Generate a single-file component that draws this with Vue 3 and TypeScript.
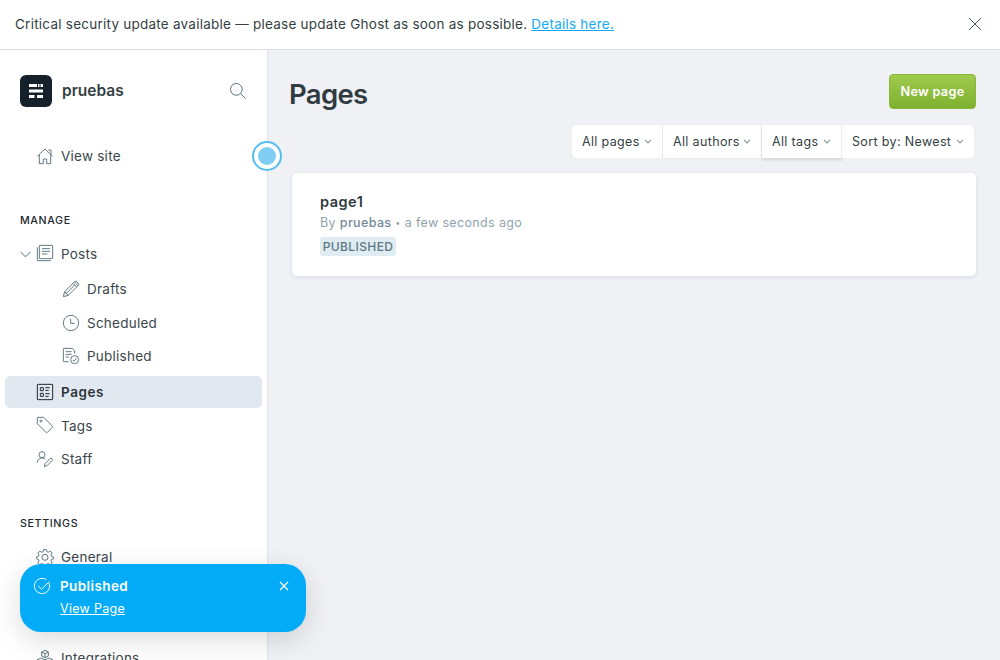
<script setup lang="ts">
interface NavItem {
  label: string
  icon: string
  gap: string
  child?: boolean
  active?: boolean
  expandable?: boolean
  raised?: boolean
}

// Outline icons drawn on a 24-unit grid.
const icons: Record<string, string> = {
  posts:
    'M4.5.5h18a1 1 0 0 1 1 1v18a1 1 0 0 1-1 1h-18a1 1 0 0 1-1-1v-18a1 1 0 0 1 1-1zM.5 3.5v19a1 1 0 0 0 1 1h19M7.5 5.5h12M7.5 9.5h12M7.5 13.5h8',
  drafts:
    'M.5 23.5l2-7.5L17 1.5a2.8 2.8 0 0 1 4 0l1.500 1.500a2.800 2.800 0 0 1 0 4L8 21.500zM2.500 16L8 21.500M15 3.500L20.500 9M17.200 1.500l5.300 5.300M5 18.500L17.500 6',
  scheduled: 'M12 .5a11.500 11.500 0 1 0 0 23a11.500 11.500 0 1 0 0-23zM11.500 5.500v7h6',
  published:
    'M8.500 20.500h-7a1 1 0 0 1-1-1v-18a1 1 0 0 1 1-1h12.500l3.500 3.500v4.500M4 5.500h9M4 9.500h9M4 13.500h5M17.500 11.500a6 6 0 1 0 0 12a6 6 0 1 0 0-12zM14.800 18l1.700 1.800l3.700-4.300',
  pages:
    'M1.500.5h21a1 1 0 0 1 1 1v21a1 1 0 0 1-1 1h-21a1 1 0 0 1-1-1v-21a1 1 0 0 1 1-1zM5 5.500h4.500v4.500h-4.500zM5 14h4.500v4.500h-4.500zM12.500 5.500h6.500M12.500 9.500h5M12.500 14.500h6.500M12.500 18.500h5',
  tags: 'M1.500.5h8.500l13 13a1.400 1.400 0 0 1 0 2l-7.500 7.500a1.400 1.400 0 0 1-2 0L.5 10v-8.500a1 1 0 0 1 1-1zM6 4.500a1.500 1.500 0 1 0 0 3a1.500 1.500 0 1 0 0-3z',
  staff:
    'M7.500 1a4.500 4.500 0 1 0 0 9a4.500 4.500 0 1 0 0-9zM.5 17.500c0-4.500 3-7 7-7c2 0 3.700.6 5 1.800M11 23.500l1-4.500l7.500-7.500a2.100 2.100 0 0 1 3 0a2.100 2.100 0 0 1 0 3L15 22z',
  home: 'M.5 12.500L12 1.500l11.500 11M3.500 10v13.500h6v-7h5v7h6V10M17 3h4v7',
  gear:
    'M10 .8h4l.8 3.200l2.200.9l2.900-1.700l2.800 2.800l-1.700 2.900l.9 2.200l2.600.7v3l-2.600.8l-.9 2.200l1.700 2.900l-2.800 2.800l-2.900-1.700l-2.200.9l-.8 2h-4l-.8-2l-2.200-.9l-2.900 1.700l-2.800-2.800l1.700-2.900l-.9-2.200l-2.600-.8v-3l2.600-.7l.9-2.200l-1.700-2.900l2.800-2.800l2.900 1.700l2.200-.9zM12 8a4.500 4.500 0 1 0 0 9a4.500 4.500 0 1 0 0-9z',
  cubes:
    'M12 .5l5 2.500v6l-5 2.500l-5-2.500V3zM7 3l5 2.500l5-2.500M12 5.500v6M6 12l5.500 2.500v6L6 23.500l-5.500-3v-6zM.5 14.500l5.500 2.700l5.500-2.700M6 17.200v6M18 12l5.500 2.500v6l-5.500 3l-5.500-3v-6zM12.500 14.500l5.500 2.700l5.500-2.700M18 17.200v6',
}

const manage: NavItem[] = [
  { label: 'Posts', icon: 'posts', gap: 'g0', expandable: true, raised: true },
  { label: 'Drafts', icon: 'drafts', gap: 'g3', child: true },
  { label: 'Scheduled', icon: 'scheduled', gap: 'g2', child: true },
  { label: 'Published', icon: 'published', gap: 'g1', child: true },
  { label: 'Pages', icon: 'pages', gap: 'g4', active: true },
  { label: 'Tags', icon: 'tags', gap: 'g2', raised: true },
  { label: 'Staff', icon: 'staff', gap: 'g1' },
]
const settings: NavItem[] = [
  { label: 'General', icon: 'gear', gap: 'g0' },
  { label: 'Integrations', icon: 'cubes', gap: 'far' },
]
const groups = [
  { title: 'Manage', items: manage },
  { title: 'Settings', items: settings },
]
const filters = [
  { label: 'All pages', cls: 'f1' },
  { label: 'All authors', cls: 'f2' },
  { label: 'All tags', cls: 'f3' },
  { label: 'Sort by: Newest', cls: 'f4' },
]
</script>

<template>
  <div class="app">
    <header class="banner">
      <p>Critical security update available — please update Ghost as soon as possible. <a>Details here.</a></p>
      <svg class="banner-close" viewBox="0 0 14 14"><path d="M1 1l12 12M13 1L1 13" /></svg>
    </header>
    <div class="body">
      <nav class="sidebar">
        <div class="brand">
          <svg class="logo" viewBox="0 0 32 32">
            <rect width="32" height="32" rx="6" fill="#15212a" />
            <path d="M9 9h8v3H9zM18 9h1.500v3H18zM20.500 9h2.500v3h-2.500zM9 14.500h14v3H9zM9 20h5.500v3H9zM17 20h6v3h-6z" fill="#fff" />
          </svg>
          <span class="brand-name">pruebas</span>
          <svg class="search" viewBox="0 0 24 24"><circle cx="9.500" cy="9.500" r="8.800" /><path d="M15.800 15.800l7.500 7.500" /></svg>
        </div>
        <div class="item view-site">
          <svg class="icon" viewBox="0 0 24 24"><path :d="icons.home" /></svg>
          <span>View site</span>
        </div>
        <section v-for="g in groups" :key="g.title" class="group">
          <h2>{{ g.title }}</h2>
          <div
            v-for="i in g.items"
            :key="i.label"
            class="item"
            :class="[i.gap, { child: i.child, active: i.active, raised: i.raised }]"
          >
            <svg v-if="i.expandable" class="expand" viewBox="0 0 10 6"><path d="M.5.700l4.500 4.300l4.500-4.300" /></svg>
            <svg class="icon" viewBox="0 0 24 24"><path :d="icons[i.icon]" /></svg>
            <span>{{ i.label }}</span>
          </div>
        </section>
        <div class="beacon"><i></i></div>
      </nav>
      <main class="content">
        <div class="head">
          <h1>Pages</h1>
          <button>New page</button>
        </div>
        <div class="filters">
          <div v-for="f in filters" :key="f.label" class="filter" :class="f.cls">
            <span>{{ f.label }}</span>
            <svg viewBox="0 0 8 5"><path d="M1 .8l3 3l3-3" /></svg>
          </div>
        </div>
        <article class="card">
          <h3>page1</h3>
          <p>By <b>pruebas</b> <span class="dot">•</span> a few seconds ago</p>
          <span class="badge">PUBLISHED</span>
        </article>
      </main>
    </div>
    <aside class="toast">
      <svg class="check" viewBox="0 0 24 24"><path d="M22.500 7.500A11.400 11.400 0 1 1 18.500 2.600M6.500 12l4.800 4.800L22.800 5.500" /></svg>
      <div class="toast-text">
        <strong>Published</strong>
        <a>View Page</a>
      </div>
      <svg class="toast-close" viewBox="0 0 10 10"><path d="M1 1l8 8M9 1L1 9" /></svg>
    </aside>
  </div>
</template>

<style>
html,
body {
  margin: 0;
  overflow: hidden;
}
</style>

<style scoped>
* {
  box-sizing: border-box;
}
.app {
  position: relative;
  display: flex;
  flex-direction: column;
  height: 660px;
  overflow: hidden;
  background: #f0f1f5;
  color: #343f44;
  font-family: Inter, 'Open Sans', sans-serif;
  font-size: 13.5px;
  letter-spacing: 0.24px;
}
svg {
  display: block;
  flex: none;
  fill: none;
}
h1, h2, h3, p {
  margin: 0;
}
.banner {
  display: flex;
  flex: none;
  align-items: center;
  justify-content: space-between;
  height: 50px;
  padding: 0 18px 2px 15px;
  border-bottom: 1px solid #d9dfe1;
  background: #fff;
}
.banner p {
  white-space: nowrap;
}
.banner a {
  color: #14a9f0;
  text-decoration: underline;
}
.banner-close {
  width: 14px;
  height: 14px;
  stroke: #4a555a;
}
.body {
  display: flex;
  flex: 1;
  min-height: 0;
}
.sidebar {
  position: relative;
  flex: none;
  width: 268px;
  border-right: 1px solid #dfe4ea;
  background: #fff;
}
.brand {
  display: flex;
  align-items: center;
  height: 32px;
  margin: 25px 21px 0 20px;
}
.logo {
  width: 32px;
  height: 32px;
}
.brand-name {
  flex: 1;
  margin: -2px 0 0 10px;
  font-size: 15.5px;
  font-weight: 600;
  letter-spacing: 0;
}
.search {
  width: 16px;
  height: 16px;
  stroke: #55707c;
  stroke-width: 1.500;
}
.item {
  position: relative;
  display: flex;
  align-items: center;
  gap: 8px;
  height: 32px;
  margin: 0 5px;
  padding-left: 32px;
  border-radius: 5px;
  color: #3a464c;
}
.item span {
  line-height: 18px;
}
.view-site {
  margin-top: 33px;
}
.child {
  padding-left: 58px;
}
.active {
  background: #e2e8f0;
  color: #2b353a;
  font-weight: 600;
  letter-spacing: 0.55px;
}
.g1 { margin-top: 1px; }
.g2 { margin-top: 2px; }
.g3 { margin-top: 3px; }
.g4 { margin-top: 4px; }
.far { margin-top: 69px; }
.icon {
  width: 16px;
  height: 16px;
  overflow: visible;
  stroke: #55717b;
  stroke-width: 1.400;
  stroke-linejoin: round;
}
.raised .icon {
  margin-bottom: 2px;
}
.active .icon {
  stroke: #20292e;
  stroke-width: 1.500;
}
.expand {
  position: absolute;
  left: 15px;
  top: 13px;
  width: 11px;
  height: 7px;
  stroke: #8ba0aa;
}
.group {
  padding-top: 40px;
}
.group h2 {
  height: 16px;
  margin: 0 0 10px 20px;
  font-size: 10.7px;
  line-height: 17px;
  font-weight: 500;
  letter-spacing: 0.62px;
  text-transform: uppercase;
  color: #20292e;
}
.beacon {
  position: absolute;
  left: 252px;
  top: 91px;
  z-index: 2;
  display: flex;
  align-items: center;
  justify-content: center;
  width: 30px;
  height: 30px;
  border: 2px solid #55bff0;
  border-radius: 50%;
  background: rgba(255, 255, 255, 0.85);
}
.beacon i {
  width: 18px;
  height: 18px;
  border-radius: 50%;
  background: #7fcdf2;
}
.content {
  flex: 1;
  padding: 24px 24px 0;
}
.head {
  display: flex;
  justify-content: space-between;
  height: 35px;
}
.head h1 {
  margin: 1px 0 0 -3px;
  font-size: 27.5px;
  line-height: 38px;
  font-weight: 600;
  letter-spacing: -0.7px;
  color: #2f3b40;
}
.head button {
  width: 87px;
  height: 35px;
  padding: 0 0 1px;
  border: 1px solid #88b93b;
  border-radius: 4px;
  background: linear-gradient(#9fcb4e, #7fb02f);
  color: #fff;
  font: 600 12.7px Inter, sans-serif;
  letter-spacing: 0.3px;
}
.filters {
  display: flex;
  width: 402px;
  height: 33px;
  margin: 16px 2px 0 auto;
}
.filter {
  display: flex;
  align-items: center;
  justify-content: space-between;
  padding: 0 10px;
  border-right: 1px solid #ebeef0;
  background: #fff;
  box-shadow: 0 0 1px rgba(0, 0, 0, 0.1);
  font-size: 12.5px;
  letter-spacing: 0.35px;
  white-space: nowrap;
}
.filter span {
  line-height: 16px;
}
.filter svg {
  width: 8px;
  height: 5px;
  stroke: #8499a2;
  stroke-width: 1.200;
}
.f1 { width: 91px; border-radius: 4px 0 0 4px; }
.f2 { width: 99px; }
.f3 { width: 80px; box-shadow: 0 2px 3px rgba(0, 0, 0, 0.12); }
.f4 { width: 132px; border-right: 0; border-radius: 0 4px 4px 0; }
.card {
  height: 103px;
  margin-top: 15px;
  padding: 19px 28px;
  border-radius: 5px;
  background: #fff;
  box-shadow: 0 1px 4px rgba(50, 80, 110, 0.14);
}
.card h3 {
  font-size: 14.5px;
  line-height: 20px;
  font-weight: 600;
  letter-spacing: 0.5px;
  color: #2f3b40;
}
.card p {
  font-size: 12.5px;
  line-height: 21px;
  letter-spacing: 0.36px;
  color: #91a3ac;
}
.card b {
  font-weight: 500;
  color: #72899a;
}
.dot {
  font-size: 9px;
  line-height: 1;
  vertical-align: 1px;
}
.badge {
  display: block;
  width: 76px;
  height: 19px;
  margin-top: 4px;
  border-radius: 3px;
  background: #dfecf2;
  color: #5c7882;
  font-size: 12px;
  line-height: 19px;
  font-weight: 450;
  letter-spacing: 0.4px;
  text-align: center;
}
.toast {
  position: absolute;
  left: 20px;
  top: 564px;
  z-index: 3;
  display: flex;
  align-items: flex-start;
  width: 286px;
  height: 68px;
  padding: 14px 17px 0 14px;
  border-radius: 21px;
  background: #04abf7;
  box-shadow: 0 8px 28px rgba(0, 0, 0, 0.14);
  color: #fff;
}
.check {
  width: 16px;
  height: 16px;
  overflow: visible;
  stroke: #fff;
  stroke-width: 1.500;
}
.toast-text {
  display: flex;
  flex: 1;
  flex-direction: column;
  margin: -2px 0 0 10px;
}
.toast-text strong {
  font-weight: 600;
  line-height: 20px;
  letter-spacing: 0.4px;
}
.toast-text a {
  align-self: flex-start;
  margin-top: 3px;
  font-size: 12.5px;
  line-height: 20px;
  letter-spacing: 0.3px;
  text-decoration: underline;
}
.toast-close {
  width: 10px;
  height: 10px;
  margin-top: 3px;
  stroke: #fff;
  stroke-width: 1.200;
}
</style>
